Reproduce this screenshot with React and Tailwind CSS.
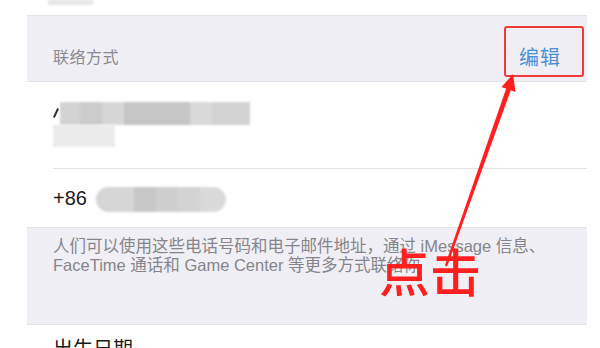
import React from 'react';

const font = "font-['Liberation_Sans','Noto_Sans_CJK_SC',sans-serif]";

const ContactSettings = () => {
  return (
    <div className={`relative w-[600px] h-[348px] overflow-hidden bg-white ${font}`}>
      <div className="ml-[27px] w-[560px] flex flex-col">
        {/* top leftover row */}
        <div className="h-[15px] bg-white">
          <div className="ml-[21px] w-[45px] h-[5px] bg-[#e6e6e8] blur-[1px]" />
        </div>

        {/* Section header */}
        <div className="h-[67px] bg-[#f0eff5] border-y border-[#e4e4e8] flex items-center justify-between pt-[18px] pl-[26px] pr-[26px]">
          <span className="text-[16px] text-[#8a8a90] tracking-[0.5px]">联络方式</span>
          <span className="mt-[1px] text-[20px] text-[#4a90d6] tracking-[1px]">编辑</span>
        </div>

        {/* Row 1 (blurred) */}
        <div className="h-[86px] bg-white pl-[26px] pt-[20px]">
          <div className="flex items-start">
            <div className="relative flex h-[23px]">
              <div className="w-[7px] bg-white relative">
                <div className="absolute left-[2px] top-[6px] w-[2px] h-[10px] bg-[#333] rotate-[25deg]" />
              </div>
              <div className="flex blur-[1px]">
                <div className="w-[20px] bg-[#d3d3d3]" />
                <div className="w-[22px] bg-[#cbcbcb]" />
                <div className="w-[22px] bg-[#d6d6d6]" />
                <div className="w-[66px] bg-[#c6c6c6]" />
                <div className="w-[22px] bg-[#d8d8d8]" />
                <div className="w-[38px] bg-[#d2d2d2]" />
              </div>
            </div>
          </div>
          <div className="w-[62px] h-[22px] bg-[#ececec] blur-[1px]" />
        </div>
        <div className="ml-[26px] h-px bg-[#e2e2e4]" />

        {/* Row 2 */}
        <div className="h-[58px] bg-white pl-[26px] flex items-center gap-[9px]">
          <span className="text-[20px] text-[#1a1a1a]">+86</span>
          <div className="flex h-[25px] w-[130px] rounded-full overflow-hidden blur-[1px] mt-[3px]">
            <div className="w-[38px] bg-[#d6d6d6]" />
            <div className="w-[22px] bg-[#c8c8c8]" />
            <div className="w-[22px] bg-[#cfcfcf]" />
            <div className="w-[22px] bg-[#d3d3d3]" />
            <div className="flex-1 bg-[#dadada]" />
          </div>
        </div>

        {/* Footer note */}
        <div className="h-[98px] bg-[#f0eff5] border-y border-[#e2e2e6] pl-[26px] pt-[9px] text-[16.5px] leading-[19px] text-[#85858b]">
          人们可以使用这些电话号码和电子邮件地址，通过 iMessage 信息、
          <br />
          FaceTime 通话和 Game Center 等更多方式联络你
        </div>

        {/* Next section */}
        <div className="bg-white pl-[26px] pt-[12px] text-[20px] leading-[24px] text-[#1a1a1a]">出生日期</div>
      </div>

      {/* Annotation: red box */}
      <div className="absolute left-[504px] top-[26px] w-[80px] h-[51px] border-2 border-[#f03a3a] rounded-[3px]" />

      {/* Annotation: arrow */}
      <svg className="absolute left-0 top-0" width="600" height="348" viewBox="0 0 600 348">
        <polygon points="447.1,266.4 444.9,265.6 506.7,87.1 511.3,88.9" fill="#ff1f1f" />
        <polygon points="513,74 515.5,92 501.5,87" fill="#ff1f1f" />
      </svg>

      {/* Annotation: label */}
      <div className="absolute left-[379px] top-[245px] text-[51px] leading-none font-medium text-[#ff1f1f] font-['Noto_Sans_CJK_SC',sans-serif]">
        点击
      </div>
    </div>
  );
};

export default function App() {
  return <ContactSettings />;
}
